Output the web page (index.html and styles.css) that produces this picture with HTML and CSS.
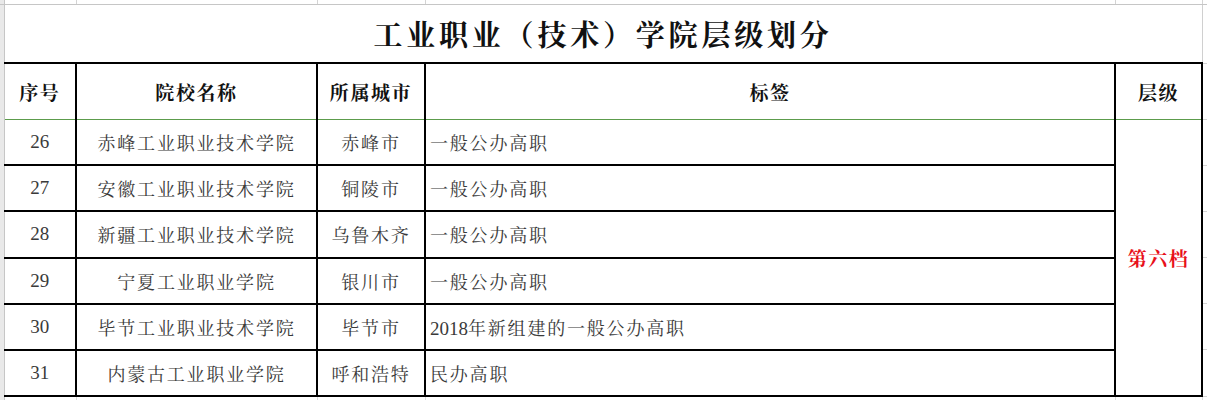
FILE: index.html
```html
<!DOCTYPE html>
<html lang="zh-CN">
<head>
<meta charset="utf-8">
<title>工业职业（技术）学院层级划分</title>
<link rel="stylesheet" href="styles.css">
</head>
<body>
<table class="sheet">
  <colgroup>
    <col class="c0"><col class="c1"><col class="c2"><col class="c3"><col class="c4"><col class="c5"><col class="c6">
  </colgroup>
  <tr class="r-top">
    <td class="band"></td><td class="g"></td><td class="g"></td><td class="g"></td><td class="g"></td><td class="g"></td><td class="g-last"></td>
  </tr>
  <tr class="r-title">
    <td class="band"></td>
    <td colspan="5" class="title">工业职业（技术）学院层级划分</td>
    <td class="side"></td>
  </tr>
  <tr class="r-head">
    <td class="band"></td>
    <td class="hd">序号</td>
    <td class="hd">院校名称</td>
    <td class="hd">所属城市</td>
    <td class="hd">标签</td>
    <td class="hd">层级</td>
    <td class="side"></td>
  </tr>
  <tr class="r-data first">
    <td class="band"></td>
    <td class="num">26</td>
    <td class="name">赤峰工业职业技术学院</td>
    <td class="city">赤峰市</td>
    <td class="tag">一般公办高职</td>
    <td class="level" rowspan="6">第六档</td>
    <td class="side"></td>
  </tr>
  <tr class="r-data">
    <td class="band"></td>
    <td class="num">27</td>
    <td class="name">安徽工业职业技术学院</td>
    <td class="city">铜陵市</td>
    <td class="tag">一般公办高职</td>
    <td class="side"></td>
  </tr>
  <tr class="r-data">
    <td class="band"></td>
    <td class="num">28</td>
    <td class="name">新疆工业职业技术学院</td>
    <td class="city">乌鲁木齐</td>
    <td class="tag">一般公办高职</td>
    <td class="side"></td>
  </tr>
  <tr class="r-data">
    <td class="band"></td>
    <td class="num">29</td>
    <td class="name">宁夏工业职业学院</td>
    <td class="city">银川市</td>
    <td class="tag">一般公办高职</td>
    <td class="side"></td>
  </tr>
  <tr class="r-data">
    <td class="band"></td>
    <td class="num">30</td>
    <td class="name">毕节工业职业技术学院</td>
    <td class="city">毕节市</td>
    <td class="tag"><span class="digits">2018</span>年新组建的一般公办高职</td>
    <td class="side"></td>
  </tr>
  <tr class="r-data">
    <td class="band"></td>
    <td class="num">31</td>
    <td class="name">内蒙古工业职业学院</td>
    <td class="city">呼和浩特</td>
    <td class="tag">民办高职</td>
    <td class="side"></td>
  </tr>
  <tr class="r-bottom">
    <td class="band"></td><td class="g"></td><td class="g"></td><td class="g"></td><td class="g"></td><td class="g"></td><td class="g-last"></td>
  </tr>
</table>
</body>
</html>
```

FILE: styles.css
```css
html, body {
  margin: 0;
  padding: 0;
  background: #ffffff;
  overflow: hidden;
}

body {
  font-family: "Noto Serif CJK SC", "Liberation Serif", "Noto Sans CJK SC", serif;
  color: #333333;
}

.sheet {
  border-collapse: collapse;
  table-layout: fixed;
  width: 1207px;
}

.sheet td {
  padding: 0;
  overflow: hidden;
  white-space: nowrap;
}

.c0 { width: 4px; }
.c1 { width: 72px; }
.c2 { width: 241px; }
.c3 { width: 108px; }
.c4 { width: 690px; }
.c5 { width: 87px; }
.c6 { width: 5px; }

.band {
  background: #e9e9e9;
  border-right: 1px solid #c6c6c6;
}

.r-top { height: 4px; }
.r-top td { border-bottom: 1px solid #c6c6c6; }
.g, .g-last { border-right: 1px solid #d4d4d4; }

.r-bottom { height: 8px; }
.r-bottom .g, .r-bottom .g-last { border-right: 1px solid #dcdcdc; }

.side {
  border-bottom: 1px solid #d4d4d4;
}

.r-title { height: 59px; }
.title {
  text-align: center;
  font-size: 29px;
  font-weight: 700;
  letter-spacing: 3.8px;
  color: #111111;
  border-right: 1px solid #d0d0d0;
  border-bottom: 2px solid #000000;
  padding-top: 2px;
}

.r-head { height: 56px; }
.hd {
  text-align: center;
  font-size: 19px;
  font-weight: 700;
  letter-spacing: 1.6px;
  color: #111111;
  border-right: 2px solid #000000;
  border-bottom: 1px solid #5c9c4c;
}

.r-data { height: 46.2px; }
.r-data td.num,
.r-data td.name,
.r-data td.city,
.r-data td.tag {
  border-right: 2px solid #000000;
  border-bottom: 2px solid #000000;
  font-size: 18px;
  letter-spacing: 1.8px;
  color: #3a3a3a;
}

.num {
  text-align: center;
  font-family: "Liberation Serif", serif;
  font-size: 19px !important;
  letter-spacing: 0 !important;
}

.name, .city { text-align: center; }

.tag {
  text-align: left;
  padding-left: 4px !important;
}

.digits {
  font-family: "Liberation Serif", serif;
  letter-spacing: 0;
  font-size: 19px;
}

.level {
  text-align: center;
  font-size: 19px;
  font-weight: 700;
  letter-spacing: 1.5px;
  color: #e8101a;
  border-right: 2px solid #000000;
  border-bottom: 2px solid #000000;
}
```
